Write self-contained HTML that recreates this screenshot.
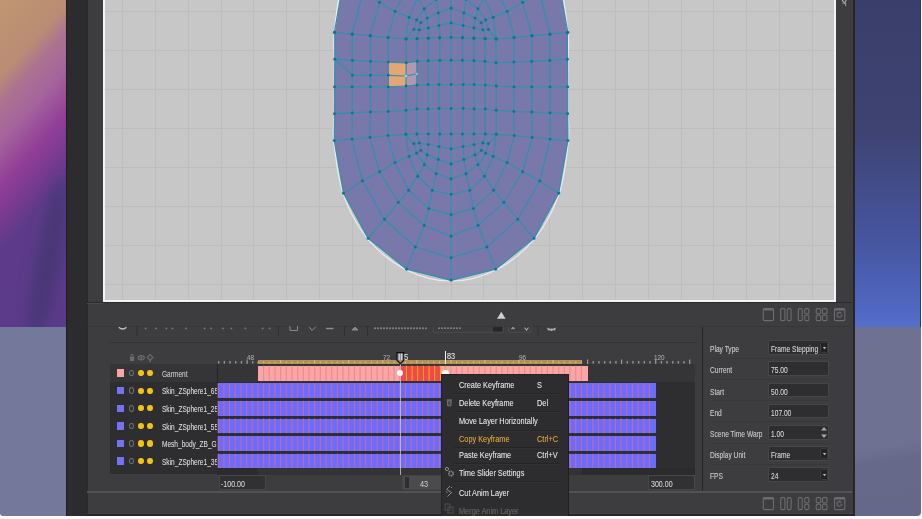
<!DOCTYPE html>
<html><head><meta charset="utf-8">
<style>
*{margin:0;padding:0;box-sizing:border-box}
html,body{width:922px;height:519px;overflow:hidden;background:#fbfbfb;font-family:"Liberation Sans",sans-serif}
.a{position:absolute}
.t{position:absolute;white-space:nowrap;line-height:1;color:#cfcfcf;font-size:8.5px;text-shadow:0 0 0.5px rgba(255,255,255,0.35)}
</style></head><body>

<svg class="a" style="left:0;top:0" width="66" height="327"><defs><linearGradient id="lg" gradientUnits="userSpaceOnUse" x1="-66" y1="60" x2="160" y2="265"><stop offset="0" stop-color="#c29872"/><stop offset="0.2" stop-color="#b98c74"/><stop offset="0.26" stop-color="#ac7290"/><stop offset="0.34" stop-color="#a4649c"/><stop offset="0.44" stop-color="#923e97"/><stop offset="0.51" stop-color="#7a3a90"/><stop offset="0.58" stop-color="#5e3b8a"/><stop offset="1" stop-color="#5a3b8c"/></linearGradient><filter id="bl" x="-1" y="-1" width="3" height="3"><feGaussianBlur stdDeviation="7"/></filter></defs><rect width="66" height="327" fill="url(#lg)"/><ellipse cx="48" cy="262" rx="12" ry="85" transform="rotate(10 48 262)" fill="#3a3468" opacity="0.6" filter="url(#bl)"/></svg>
<div class="a" style="left:0;top:326.5px;width:66px;height:189.5px;background:#74789a;border-bottom-left-radius:3px"></div>
<div class="a" style="left:855px;top:0;width:66px;height:327px;background:linear-gradient(180deg,#3a3e6a 0%,#3e4372 40%,#4756a2 75%,#5068c2 95%,#5570cc 100%)"></div>
<div class="a" style="left:855px;top:326.5px;width:66px;height:189.5px;background:linear-gradient(170deg,#6f7193 0%,#6f7193 62%,#67698b 70%,#66688a 100%);border-bottom-right-radius:4px"></div>
<div class="a" style="left:920px;top:0;width:1px;height:327px;background:#30356a"></div>
<div class="a" style="left:66px;top:0;width:21px;height:516px;background:#2c2c2e;border-left:1px solid #1e1e20"></div>
<div class="a" style="left:87.8px;top:0;width:765.4px;height:516px;background:#3d3d3f"></div>
<div class="a" style="left:85.8px;top:0;width:2px;height:516px;background:#2a2a2c"></div>
<div class="a" style="left:853.2px;top:0;width:1.8px;height:516px;background:#262628"></div>
<div class="a" style="left:103px;top:0;width:733px;height:302px;background:#f4f4f4"></div>
<div class="a" style="left:105px;top:0;width:729px;height:300px;background:#c7c7c7;overflow:hidden">
<div class="a" style="left:17.0px;top:0;width:1px;height:300px;background:#bdbdbd"></div>
<div class="a" style="left:49.9px;top:0;width:1px;height:300px;background:#bdbdbd"></div>
<div class="a" style="left:82.7px;top:0;width:1px;height:300px;background:#bdbdbd"></div>
<div class="a" style="left:115.6px;top:0;width:1px;height:300px;background:#bdbdbd"></div>
<div class="a" style="left:148.4px;top:0;width:1px;height:300px;background:#bdbdbd"></div>
<div class="a" style="left:181.3px;top:0;width:1px;height:300px;background:#bdbdbd"></div>
<div class="a" style="left:214.1px;top:0;width:1px;height:300px;background:#bdbdbd"></div>
<div class="a" style="left:247.0px;top:0;width:1px;height:300px;background:#bdbdbd"></div>
<div class="a" style="left:279.9px;top:0;width:1px;height:300px;background:#bdbdbd"></div>
<div class="a" style="left:312.7px;top:0;width:1px;height:300px;background:#bdbdbd"></div>
<div class="a" style="left:345.6px;top:0;width:1px;height:300px;background:#bdbdbd"></div>
<div class="a" style="left:378.4px;top:0;width:1px;height:300px;background:#bdbdbd"></div>
<div class="a" style="left:411.3px;top:0;width:1px;height:300px;background:#bdbdbd"></div>
<div class="a" style="left:444.1px;top:0;width:1px;height:300px;background:#bdbdbd"></div>
<div class="a" style="left:477.0px;top:0;width:1px;height:300px;background:#bdbdbd"></div>
<div class="a" style="left:509.9px;top:0;width:1px;height:300px;background:#bdbdbd"></div>
<div class="a" style="left:542.7px;top:0;width:1px;height:300px;background:#bdbdbd"></div>
<div class="a" style="left:575.6px;top:0;width:1px;height:300px;background:#bdbdbd"></div>
<div class="a" style="left:608.4px;top:0;width:1px;height:300px;background:#bdbdbd"></div>
<div class="a" style="left:641.3px;top:0;width:1px;height:300px;background:#bdbdbd"></div>
<div class="a" style="left:674.1px;top:0;width:1px;height:300px;background:#bdbdbd"></div>
<div class="a" style="left:707.0px;top:0;width:1px;height:300px;background:#bdbdbd"></div>
<div class="a" style="left:0;top:11.0px;width:729px;height:1px;background:#bdbdbd"></div>
<div class="a" style="left:0;top:49.9px;width:729px;height:1px;background:#bdbdbd"></div>
<div class="a" style="left:0;top:88.9px;width:729px;height:1px;background:#bdbdbd"></div>
<div class="a" style="left:0;top:127.8px;width:729px;height:1px;background:#bdbdbd"></div>
<div class="a" style="left:0;top:166.7px;width:729px;height:1px;background:#bdbdbd"></div>
<div class="a" style="left:0;top:205.7px;width:729px;height:1px;background:#bdbdbd"></div>
<div class="a" style="left:0;top:244.6px;width:729px;height:1px;background:#bdbdbd"></div>
<div class="a" style="left:0;top:283.5px;width:729px;height:1px;background:#bdbdbd"></div>
</div>
<svg class="a" style="left:0;top:0" width="922" height="302" viewBox="0 0 922 302">
<path d="M343.5,-18.4 C337.9,-2.7 336.2,19.6 334.8,32.5 C333.4,45.4 334.9,50.1 334.8,59.2 C334.8,68.3 334.6,77.8 334.5,86.9 C334.4,96.0 334.5,104.8 334.5,113.7 C334.5,122.7 332.8,127.3 334.3,140.6 C335.8,153.8 337.9,176.9 343.5,193.2 C349.1,209.5 357.6,225.7 368.1,238.4 C378.6,251.1 392.8,262.2 406.6,269.2 C420.4,276.2 436.3,280.3 451.1,280.3 C465.9,280.3 481.8,276.2 495.6,269.2 C509.4,262.2 523.6,251.1 534.1,238.4 C544.6,225.7 553.1,209.5 558.7,193.2 C564.3,176.9 566.4,153.8 567.9,140.6 C569.4,127.3 567.7,122.7 567.7,113.7 C567.7,104.8 567.8,96.0 567.7,86.9 C567.7,77.8 567.5,68.3 567.4,59.2 C567.4,50.1 568.9,45.4 567.4,32.5 C566.0,19.6 564.2,-2.7 558.7,-18.4" fill="none" stroke="#eeeeee" stroke-width="1.1" transform="translate(451.1 90) scale(1.004) translate(-451.1 -90)"/>
<polygon points="343.5,-18.4 334.8,32.5 334.8,59.2 334.5,86.9 334.5,113.7 334.3,140.6 343.5,193.2 368.1,238.4 406.6,269.2 451.1,280.3 495.6,269.2 534.1,238.4 558.7,193.2 567.9,140.6 567.7,113.7 567.7,86.9 567.4,59.2 567.4,32.5 558.7,-18.4" fill="#7878aa"/>
<rect x="388.5" y="62.4" width="17.5" height="24.2" fill="#e3a674"/>
<polygon points="406,62.6 416.3,61.5 416.3,85.3 406,86.2" fill="#b596ae"/>
<g fill="none" stroke="#2f91b0" stroke-width="1.2" stroke-linejoin="round">
<polyline points="334.8,32.5 352.4,34.2 370.5,35.8 388.3,37.6 406.2,39.0 417.3,38.7 428.4,38.3 439.7,37.8 451.1,37.4 462.5,37.8 473.8,38.3 484.9,38.7 496.0,39.0 513.9,37.6 531.7,35.8 549.8,34.2 567.4,32.5"/>
<polyline points="334.8,59.2 352.4,60.4 370.5,61.4 388.3,62.1 406.2,62.8 417.2,61.4 428.3,60.7 439.8,60.4 451.1,60.3 462.4,60.4 473.9,60.7 485.0,61.4 496.0,62.8 513.9,62.1 531.7,61.4 549.8,60.4 567.4,59.2"/>
<polyline points="334.5,86.9 352.2,86.9 370.4,86.9 388.3,86.9 406.0,86.0 416.9,85.1 428.1,84.6 439.0,84.6 451.1,84.5 463.2,84.6 474.1,84.6 485.3,85.1 496.2,86.0 513.9,86.9 531.8,86.9 550.0,86.9 567.7,86.9"/>
<polyline points="334.5,113.7 352.2,112.9 370.4,112.0 388.3,111.5 406.0,110.3 416.9,109.0 428.1,109.0 439.0,108.5 451.1,108.5 463.2,108.5 474.1,109.0 485.3,109.0 496.2,110.3 513.9,111.5 531.8,112.0 550.0,112.9 567.7,113.7"/>
<polyline points="334.3,140.6 352.1,139.1 370.0,137.5 388.0,135.6 405.9,134.3 416.9,134.0 428.3,134.0 439.8,134.0 451.1,134.0 462.4,134.0 473.9,134.0 485.3,134.0 496.3,134.3 514.2,135.6 532.2,137.5 550.1,139.1 567.9,140.6"/>
<polyline points="334.8,32.5 334.8,59.2 334.5,86.9 334.5,113.7 334.3,140.6"/>
<polyline points="567.4,32.5 567.4,59.2 567.7,86.9 567.7,113.7 567.9,140.6"/>
<polyline points="352.4,34.2 352.4,60.4 352.2,86.9 352.2,112.9 352.1,139.1"/>
<polyline points="549.8,34.2 549.8,60.4 550.0,86.9 550.0,112.9 550.1,139.1"/>
<polyline points="370.5,35.8 370.5,61.4 370.4,86.9 370.4,112.0 370.0,137.5"/>
<polyline points="531.7,35.8 531.7,61.4 531.8,86.9 531.8,112.0 532.2,137.5"/>
<polyline points="388.3,37.6 388.3,62.1 388.3,86.9 388.3,111.5 388.0,135.6"/>
<polyline points="513.9,37.6 513.9,62.1 513.9,86.9 513.9,111.5 514.2,135.6"/>
<polyline points="406.2,39.0 406.2,62.8 406.0,86.0 406.0,110.3 405.9,134.3"/>
<polyline points="496.0,39.0 496.0,62.8 496.2,86.0 496.2,110.3 496.3,134.3"/>
<polyline points="417.3,38.7 417.2,61.4 416.9,85.1 416.9,109.0 416.9,134.0"/>
<polyline points="484.9,38.7 485.0,61.4 485.3,85.1 485.3,109.0 485.3,134.0"/>
<polyline points="428.4,38.3 428.3,60.7 428.1,84.6 428.1,109.0 428.3,134.0"/>
<polyline points="473.8,38.3 473.9,60.7 474.1,84.6 474.1,109.0 473.9,134.0"/>
<polyline points="439.7,37.8 439.8,60.4 439.0,84.6 439.0,108.5 439.8,134.0"/>
<polyline points="462.5,37.8 462.4,60.4 463.2,84.6 463.2,108.5 462.4,134.0"/>
<polyline points="451.1,37.4 451.1,60.3 451.1,84.5 451.1,108.5 451.1,134.0"/>
<polyline points="334.3,140.6 343.5,193.2 368.1,238.4 406.6,269.2 451.1,280.3"/>
<polyline points="567.9,140.6 558.7,193.2 534.1,238.4 495.6,269.2 451.1,280.3"/>
<polyline points="352.1,139.1 362.4,180.9 384.5,219.3 415.3,247.0 451.1,257.8"/>
<polyline points="550.1,139.1 539.8,180.9 517.7,219.3 486.9,247.0 451.1,257.8"/>
<polyline points="370.0,137.5 379.5,171.8 398.3,202.4 424.2,225.5 451.1,236.3"/>
<polyline points="532.2,137.5 522.7,171.8 503.9,202.4 478.0,225.5 451.1,236.3"/>
<polyline points="388.0,135.6 395.0,162.6 408.6,190.2 428.8,208.6 451.1,214.7"/>
<polyline points="514.2,135.6 507.2,162.6 493.6,190.2 473.4,208.6 451.1,214.7"/>
<polyline points="405.9,134.3 409.0,156.4 417.7,176.2 432.3,190.4 451.1,194.4"/>
<polyline points="496.3,134.3 493.2,156.4 484.5,176.2 469.9,190.4 451.1,194.4"/>
<polyline points="416.6,153.3 424.3,164.7 436.2,173.8 451.1,178.9"/>
<polyline points="485.6,153.3 477.9,164.7 466.0,173.8 451.1,178.9"/>
<polyline points="420.9,150.4 427.2,154.9 438.3,159.6 451.1,164.0"/>
<polyline points="481.3,150.4 475.0,154.9 463.9,159.6 451.1,164.0"/>
<polyline points="413.8,143.8 419.3,143.0 428.3,144.6 439.0,146.6 451.1,148.9"/>
<polyline points="488.4,143.8 482.9,143.0 473.9,144.6 463.2,146.6 451.1,148.9"/>
<polyline points="343.5,193.2 362.4,180.9 379.5,171.8 395.0,162.6 409.0,156.4 416.6,153.3 420.9,150.4 419.3,143.0 416.9,134.0"/>
<polyline points="558.7,193.2 539.8,180.9 522.7,171.8 507.2,162.6 493.2,156.4 485.6,153.3 481.3,150.4 482.9,143.0 485.3,134.0"/>
<polyline points="368.1,238.4 384.5,219.3 398.3,202.4 408.6,190.2 417.7,176.2 424.3,164.7 427.2,154.9 428.3,144.6 428.3,134.0"/>
<polyline points="534.1,238.4 517.7,219.3 503.9,202.4 493.6,190.2 484.5,176.2 477.9,164.7 475.0,154.9 473.9,144.6 473.9,134.0"/>
<polyline points="406.6,269.2 415.3,247.0 424.2,225.5 428.8,208.6 432.3,190.4 436.2,173.8 438.3,159.6 439.0,146.6 439.8,134.0"/>
<polyline points="495.6,269.2 486.9,247.0 478.0,225.5 473.4,208.6 469.9,190.4 466.0,173.8 463.9,159.6 463.2,146.6 462.4,134.0"/>
<polyline points="405.9,134.3 413.8,143.8 416.6,153.3"/>
<polyline points="496.3,134.3 488.4,143.8 485.6,153.3"/>
<polyline points="334.3,32.5 343.5,-18.4 368.1,-62.1 406.6,-91.9 451.1,-104.5"/>
<polyline points="567.9,32.5 558.7,-18.4 534.1,-62.1 495.6,-91.9 451.1,-104.5"/>
<polyline points="352.1,34.2 362.4,-6.4 384.5,-43.6 415.3,-70.8 451.1,-82.7"/>
<polyline points="550.1,34.2 539.8,-6.4 517.7,-43.6 486.9,-70.8 451.1,-82.7"/>
<polyline points="370.0,35.8 379.5,2.5 398.3,-27.1 424.2,-50.3 451.1,-61.8"/>
<polyline points="532.2,35.8 522.7,2.5 503.9,-27.1 478.0,-50.3 451.1,-61.8"/>
<polyline points="388.0,37.6 395.0,11.4 408.6,-15.4 428.8,-34.1 451.1,-40.9"/>
<polyline points="514.2,37.6 507.2,11.4 493.6,-15.4 473.4,-34.1 451.1,-40.9"/>
<polyline points="405.9,39.0 409.0,17.4 417.7,-2.2 432.3,-16.6 451.1,-21.2"/>
<polyline points="496.3,39.0 493.2,17.4 484.5,-2.2 469.9,-16.6 451.1,-21.2"/>
<polyline points="416.6,20.0 424.3,8.7 436.2,-0.7 451.1,-6.2"/>
<polyline points="485.6,20.0 477.9,8.7 466.0,-0.7 451.1,-6.2"/>
<polyline points="420.9,22.7 427.2,18.1 438.3,13.0 451.1,8.3"/>
<polyline points="481.3,22.7 475.0,18.1 463.9,13.0 451.1,8.3"/>
<polyline points="413.8,29.4 419.3,29.9 428.3,28.0 439.0,25.6 451.1,22.9"/>
<polyline points="488.4,29.4 482.9,29.9 473.9,28.0 463.2,25.6 451.1,22.9"/>
<polyline points="343.5,-18.4 362.4,-6.4 379.5,2.5 395.0,11.4 409.0,17.4 416.6,20.0 420.9,22.7 419.3,29.9 416.9,38.7"/>
<polyline points="558.7,-18.4 539.8,-6.4 522.7,2.5 507.2,11.4 493.2,17.4 485.6,20.0 481.3,22.7 482.9,29.9 485.3,38.7"/>
<polyline points="368.1,-62.1 384.5,-43.6 398.3,-27.1 408.6,-15.4 417.7,-2.2 424.3,8.7 427.2,18.1 428.3,28.0 428.3,38.3"/>
<polyline points="534.1,-62.1 517.7,-43.6 503.9,-27.1 493.6,-15.4 484.5,-2.2 477.9,8.7 475.0,18.1 473.9,28.0 473.9,38.3"/>
<polyline points="406.6,-91.9 415.3,-70.8 424.2,-50.3 428.8,-34.1 432.3,-16.6 436.2,-0.7 438.3,13.0 439.0,25.6 439.8,37.8"/>
<polyline points="495.6,-91.9 486.9,-70.8 478.0,-50.3 473.4,-34.1 469.9,-16.6 466.0,-0.7 463.9,13.0 463.2,25.6 462.4,37.8"/>
<polyline points="405.9,39.0 413.8,29.4 416.6,20.0"/>
<polyline points="496.3,39.0 488.4,29.4 485.6,20.0"/>
<polyline points="451.1,134.0 451.1,148.9 451.1,164.0 451.1,178.9 451.1,194.4 451.1,214.7 451.1,236.3 451.1,257.8 451.1,280.3"/>
<polyline points="451.1,37.4 451.1,22.9 451.1,8.3 451.1,-6.2 451.1,-21.2 451.1,-40.9 451.1,-61.8 451.1,-82.7 451.1,-104.5"/>
<polyline points="334.8,59.2 352.4,75.3 370.4,75.3 388.3,75.3 406.0,76.0 416.5,73.9"/>
</g><g fill="#176f8e">
<circle cx="334.3" cy="32.5" r="1.45"/>
<circle cx="334.3" cy="140.6" r="1.45"/>
<circle cx="334.5" cy="86.9" r="1.45"/>
<circle cx="334.5" cy="113.7" r="1.45"/>
<circle cx="334.8" cy="32.5" r="1.45"/>
<circle cx="334.8" cy="59.2" r="1.45"/>
<circle cx="343.5" cy="-18.4" r="1.45"/>
<circle cx="343.5" cy="193.2" r="1.45"/>
<circle cx="352.1" cy="34.2" r="1.45"/>
<circle cx="352.1" cy="139.1" r="1.45"/>
<circle cx="352.2" cy="86.9" r="1.45"/>
<circle cx="352.2" cy="112.9" r="1.45"/>
<circle cx="352.4" cy="34.2" r="1.45"/>
<circle cx="352.4" cy="60.4" r="1.45"/>
<circle cx="352.4" cy="75.3" r="1.45"/>
<circle cx="362.4" cy="-6.4" r="1.45"/>
<circle cx="362.4" cy="180.9" r="1.45"/>
<circle cx="368.1" cy="-62.1" r="1.45"/>
<circle cx="368.1" cy="238.4" r="1.45"/>
<circle cx="370.0" cy="35.8" r="1.45"/>
<circle cx="370.0" cy="137.5" r="1.45"/>
<circle cx="370.4" cy="75.3" r="1.45"/>
<circle cx="370.4" cy="86.9" r="1.45"/>
<circle cx="370.4" cy="112.0" r="1.45"/>
<circle cx="370.5" cy="35.8" r="1.45"/>
<circle cx="370.5" cy="61.4" r="1.45"/>
<circle cx="379.5" cy="2.5" r="1.45"/>
<circle cx="379.5" cy="171.8" r="1.45"/>
<circle cx="384.5" cy="-43.6" r="1.45"/>
<circle cx="384.5" cy="219.3" r="1.45"/>
<circle cx="388.0" cy="37.6" r="1.45"/>
<circle cx="388.0" cy="135.6" r="1.45"/>
<circle cx="388.3" cy="37.6" r="1.45"/>
<circle cx="388.3" cy="62.1" r="1.45"/>
<circle cx="388.3" cy="75.3" r="1.45"/>
<circle cx="388.3" cy="86.9" r="1.45"/>
<circle cx="388.3" cy="111.5" r="1.45"/>
<circle cx="395.0" cy="11.4" r="1.45"/>
<circle cx="395.0" cy="162.6" r="1.45"/>
<circle cx="398.3" cy="-27.1" r="1.45"/>
<circle cx="398.3" cy="202.4" r="1.45"/>
<circle cx="405.9" cy="39.0" r="1.45"/>
<circle cx="405.9" cy="134.3" r="1.45"/>
<circle cx="406.0" cy="76.0" r="1.45"/>
<circle cx="406.0" cy="86.0" r="1.45"/>
<circle cx="406.0" cy="110.3" r="1.45"/>
<circle cx="406.2" cy="39.0" r="1.45"/>
<circle cx="406.2" cy="62.8" r="1.45"/>
<circle cx="406.6" cy="-91.9" r="1.45"/>
<circle cx="406.6" cy="269.2" r="1.45"/>
<circle cx="408.6" cy="-15.4" r="1.45"/>
<circle cx="408.6" cy="190.2" r="1.45"/>
<circle cx="409.0" cy="17.4" r="1.45"/>
<circle cx="409.0" cy="156.4" r="1.45"/>
<circle cx="413.8" cy="29.4" r="1.45"/>
<circle cx="413.8" cy="143.8" r="1.45"/>
<circle cx="415.3" cy="-70.8" r="1.45"/>
<circle cx="415.3" cy="247.0" r="1.45"/>
<circle cx="416.5" cy="73.9" r="1.45"/>
<circle cx="416.6" cy="20.0" r="1.45"/>
<circle cx="416.6" cy="153.3" r="1.45"/>
<circle cx="416.9" cy="38.7" r="1.45"/>
<circle cx="416.9" cy="85.1" r="1.45"/>
<circle cx="416.9" cy="109.0" r="1.45"/>
<circle cx="416.9" cy="134.0" r="1.45"/>
<circle cx="417.2" cy="61.4" r="1.45"/>
<circle cx="417.3" cy="38.7" r="1.45"/>
<circle cx="417.7" cy="-2.2" r="1.45"/>
<circle cx="417.7" cy="176.2" r="1.45"/>
<circle cx="419.3" cy="29.9" r="1.45"/>
<circle cx="419.3" cy="143.0" r="1.45"/>
<circle cx="420.9" cy="22.7" r="1.45"/>
<circle cx="420.9" cy="150.4" r="1.45"/>
<circle cx="424.2" cy="-50.3" r="1.45"/>
<circle cx="424.2" cy="225.5" r="1.45"/>
<circle cx="424.3" cy="8.7" r="1.45"/>
<circle cx="424.3" cy="164.7" r="1.45"/>
<circle cx="427.2" cy="18.1" r="1.45"/>
<circle cx="427.2" cy="154.9" r="1.45"/>
<circle cx="428.1" cy="84.6" r="1.45"/>
<circle cx="428.1" cy="109.0" r="1.45"/>
<circle cx="428.3" cy="28.0" r="1.45"/>
<circle cx="428.3" cy="38.3" r="1.45"/>
<circle cx="428.3" cy="60.7" r="1.45"/>
<circle cx="428.3" cy="134.0" r="1.45"/>
<circle cx="428.3" cy="144.6" r="1.45"/>
<circle cx="428.4" cy="38.3" r="1.45"/>
<circle cx="428.8" cy="-34.1" r="1.45"/>
<circle cx="428.8" cy="208.6" r="1.45"/>
<circle cx="432.3" cy="-16.6" r="1.45"/>
<circle cx="432.3" cy="190.4" r="1.45"/>
<circle cx="436.2" cy="-0.7" r="1.45"/>
<circle cx="436.2" cy="173.8" r="1.45"/>
<circle cx="438.3" cy="13.0" r="1.45"/>
<circle cx="438.3" cy="159.6" r="1.45"/>
<circle cx="439.0" cy="25.6" r="1.45"/>
<circle cx="439.0" cy="84.6" r="1.45"/>
<circle cx="439.0" cy="108.5" r="1.45"/>
<circle cx="439.0" cy="146.6" r="1.45"/>
<circle cx="439.7" cy="37.8" r="1.45"/>
<circle cx="439.8" cy="37.8" r="1.45"/>
<circle cx="439.8" cy="60.4" r="1.45"/>
<circle cx="439.8" cy="134.0" r="1.45"/>
<circle cx="451.1" cy="-104.5" r="1.45"/>
<circle cx="451.1" cy="-82.7" r="1.45"/>
<circle cx="451.1" cy="-61.8" r="1.45"/>
<circle cx="451.1" cy="-40.9" r="1.45"/>
<circle cx="451.1" cy="-21.2" r="1.45"/>
<circle cx="451.1" cy="-6.2" r="1.45"/>
<circle cx="451.1" cy="8.3" r="1.45"/>
<circle cx="451.1" cy="22.9" r="1.45"/>
<circle cx="451.1" cy="37.4" r="1.45"/>
<circle cx="451.1" cy="60.3" r="1.45"/>
<circle cx="451.1" cy="84.5" r="1.45"/>
<circle cx="451.1" cy="108.5" r="1.45"/>
<circle cx="451.1" cy="134.0" r="1.45"/>
<circle cx="451.1" cy="148.9" r="1.45"/>
<circle cx="451.1" cy="164.0" r="1.45"/>
<circle cx="451.1" cy="178.9" r="1.45"/>
<circle cx="451.1" cy="194.4" r="1.45"/>
<circle cx="451.1" cy="214.7" r="1.45"/>
<circle cx="451.1" cy="236.3" r="1.45"/>
<circle cx="451.1" cy="257.8" r="1.45"/>
<circle cx="451.1" cy="280.3" r="1.45"/>
<circle cx="462.4" cy="37.8" r="1.45"/>
<circle cx="462.4" cy="60.4" r="1.45"/>
<circle cx="462.4" cy="134.0" r="1.45"/>
<circle cx="462.5" cy="37.8" r="1.45"/>
<circle cx="463.2" cy="25.6" r="1.45"/>
<circle cx="463.2" cy="84.6" r="1.45"/>
<circle cx="463.2" cy="108.5" r="1.45"/>
<circle cx="463.2" cy="146.6" r="1.45"/>
<circle cx="463.9" cy="13.0" r="1.45"/>
<circle cx="463.9" cy="159.6" r="1.45"/>
<circle cx="466.0" cy="-0.7" r="1.45"/>
<circle cx="466.0" cy="173.8" r="1.45"/>
<circle cx="469.9" cy="-16.6" r="1.45"/>
<circle cx="469.9" cy="190.4" r="1.45"/>
<circle cx="473.4" cy="-34.1" r="1.45"/>
<circle cx="473.4" cy="208.6" r="1.45"/>
<circle cx="473.8" cy="38.3" r="1.45"/>
<circle cx="473.9" cy="28.0" r="1.45"/>
<circle cx="473.9" cy="38.3" r="1.45"/>
<circle cx="473.9" cy="60.7" r="1.45"/>
<circle cx="473.9" cy="134.0" r="1.45"/>
<circle cx="473.9" cy="144.6" r="1.45"/>
<circle cx="474.1" cy="84.6" r="1.45"/>
<circle cx="474.1" cy="109.0" r="1.45"/>
<circle cx="475.0" cy="18.1" r="1.45"/>
<circle cx="475.0" cy="154.9" r="1.45"/>
<circle cx="477.9" cy="8.7" r="1.45"/>
<circle cx="477.9" cy="164.7" r="1.45"/>
<circle cx="478.0" cy="-50.3" r="1.45"/>
<circle cx="478.0" cy="225.5" r="1.45"/>
<circle cx="481.3" cy="22.7" r="1.45"/>
<circle cx="481.3" cy="150.4" r="1.45"/>
<circle cx="482.9" cy="29.9" r="1.45"/>
<circle cx="482.9" cy="143.0" r="1.45"/>
<circle cx="484.5" cy="-2.2" r="1.45"/>
<circle cx="484.5" cy="176.2" r="1.45"/>
<circle cx="484.9" cy="38.7" r="1.45"/>
<circle cx="485.0" cy="61.4" r="1.45"/>
<circle cx="485.3" cy="38.7" r="1.45"/>
<circle cx="485.3" cy="85.1" r="1.45"/>
<circle cx="485.3" cy="109.0" r="1.45"/>
<circle cx="485.3" cy="134.0" r="1.45"/>
<circle cx="485.6" cy="20.0" r="1.45"/>
<circle cx="485.6" cy="153.3" r="1.45"/>
<circle cx="486.9" cy="-70.8" r="1.45"/>
<circle cx="486.9" cy="247.0" r="1.45"/>
<circle cx="488.4" cy="29.4" r="1.45"/>
<circle cx="488.4" cy="143.8" r="1.45"/>
<circle cx="493.2" cy="17.4" r="1.45"/>
<circle cx="493.2" cy="156.4" r="1.45"/>
<circle cx="493.6" cy="-15.4" r="1.45"/>
<circle cx="493.6" cy="190.2" r="1.45"/>
<circle cx="495.6" cy="-91.9" r="1.45"/>
<circle cx="495.6" cy="269.2" r="1.45"/>
<circle cx="496.0" cy="39.0" r="1.45"/>
<circle cx="496.0" cy="62.8" r="1.45"/>
<circle cx="496.2" cy="86.0" r="1.45"/>
<circle cx="496.2" cy="110.3" r="1.45"/>
<circle cx="496.3" cy="39.0" r="1.45"/>
<circle cx="496.3" cy="134.3" r="1.45"/>
<circle cx="503.9" cy="-27.1" r="1.45"/>
<circle cx="503.9" cy="202.4" r="1.45"/>
<circle cx="507.2" cy="11.4" r="1.45"/>
<circle cx="507.2" cy="162.6" r="1.45"/>
<circle cx="513.9" cy="37.6" r="1.45"/>
<circle cx="513.9" cy="62.1" r="1.45"/>
<circle cx="513.9" cy="86.9" r="1.45"/>
<circle cx="513.9" cy="111.5" r="1.45"/>
<circle cx="514.2" cy="37.6" r="1.45"/>
<circle cx="514.2" cy="135.6" r="1.45"/>
<circle cx="517.7" cy="-43.6" r="1.45"/>
<circle cx="517.7" cy="219.3" r="1.45"/>
<circle cx="522.7" cy="2.5" r="1.45"/>
<circle cx="522.7" cy="171.8" r="1.45"/>
<circle cx="531.7" cy="35.8" r="1.45"/>
<circle cx="531.7" cy="61.4" r="1.45"/>
<circle cx="531.8" cy="86.9" r="1.45"/>
<circle cx="531.8" cy="112.0" r="1.45"/>
<circle cx="532.2" cy="35.8" r="1.45"/>
<circle cx="532.2" cy="137.5" r="1.45"/>
<circle cx="534.1" cy="-62.1" r="1.45"/>
<circle cx="534.1" cy="238.4" r="1.45"/>
<circle cx="539.8" cy="-6.4" r="1.45"/>
<circle cx="539.8" cy="180.9" r="1.45"/>
<circle cx="549.8" cy="34.2" r="1.45"/>
<circle cx="549.8" cy="60.4" r="1.45"/>
<circle cx="550.0" cy="86.9" r="1.45"/>
<circle cx="550.0" cy="112.9" r="1.45"/>
<circle cx="550.1" cy="34.2" r="1.45"/>
<circle cx="550.1" cy="139.1" r="1.45"/>
<circle cx="558.7" cy="-18.4" r="1.45"/>
<circle cx="558.7" cy="193.2" r="1.45"/>
<circle cx="567.4" cy="32.5" r="1.45"/>
<circle cx="567.4" cy="59.2" r="1.45"/>
<circle cx="567.7" cy="86.9" r="1.45"/>
<circle cx="567.7" cy="113.7" r="1.45"/>
<circle cx="567.9" cy="32.5" r="1.45"/>
<circle cx="567.9" cy="140.6" r="1.45"/>
<circle cx="405.9" cy="76.1" r="1.5" fill="#8fd4e4"/><circle cx="416.6" cy="73.9" r="1.4" fill="#7fc4d8"/>
</g></svg>
<svg class="a" style="left:840px;top:0" width="10" height="8"><path d="M2.3,0 L3.5,2.2 M6.2,0 L5,2.2" stroke="#b8b8b8" stroke-width="1.1" fill="none"/><polygon points="2,3.6 6.6,3.6 4.5,2" fill="#c8c8c8"/><line x1="5.6" y1="3.5" x2="5.6" y2="6.2" stroke="#a8a8a8" stroke-width="0.9"/></svg>
<div class="a" style="left:87.0px;top:302.0px;width:765.0px;height:1.2px;background:#2a2a2c;"></div>
<div class="a" style="left:87.0px;top:303.2px;width:16.0px;height:1.0px;background:#4a4a4c;"></div>
<svg class="a" style="left:496px;top:311px" width="11" height="9"><polygon points="5.3,0.8 9.6,7.8 1,7.8" fill="#cfcfcf"/></svg>
<svg class="a" style="left:760px;top:307.4px" width="90" height="16" viewBox="0 0 90 16"><g fill="none" stroke="#6c6c6e" stroke-width="1.1"><rect x="3.3" y="1.6" width="10.2" height="12" rx="1.2"/><line x1="3.3" y1="2.6" x2="13.5" y2="2.6" stroke-width="1.8"/><rect x="20.7" y="1.6" width="4.2" height="12" rx="1.2"/><rect x="27.3" y="1.6" width="3.8" height="12" rx="1.2"/><rect x="38.3" y="1.6" width="3.9" height="12" rx="1.2"/><rect x="44.8" y="1.6" width="4.1" height="5.3" rx="1.2"/><rect x="44.8" y="8.3" width="4.1" height="5.3" rx="1.2"/><rect x="56.2" y="1.6" width="4.5" height="5.3" rx="1.2"/><rect x="62.5" y="1.6" width="4.5" height="5.3" rx="1.2"/><rect x="56.2" y="8.3" width="4.5" height="5.3" rx="1.2"/><rect x="62.5" y="8.3" width="4.5" height="5.3" rx="1.2"/><rect x="74.5" y="1.6" width="10.3" height="12" rx="1.2"/><line x1="74.5" y1="2.6" x2="84.8" y2="2.6" stroke-width="1.8"/><path d="M81.8,7.8 A2.4,2.4 0 1 1 80.2,5.6" stroke-width="1.2"/><path d="M79.6,4.6 l1.6,1.2 l-1.5,1.2" stroke-width="0.9"/></g></svg>
<svg class="a" style="left:760px;top:496.2px" width="90" height="16" viewBox="0 0 90 16"><g fill="none" stroke="#6c6c6e" stroke-width="1.1"><rect x="3.3" y="1.6" width="10.2" height="12" rx="1.2"/><line x1="3.3" y1="2.6" x2="13.5" y2="2.6" stroke-width="1.8"/><rect x="20.7" y="1.6" width="4.2" height="12" rx="1.2"/><rect x="27.3" y="1.6" width="3.8" height="12" rx="1.2"/><rect x="38.3" y="1.6" width="3.9" height="12" rx="1.2"/><rect x="44.8" y="1.6" width="4.1" height="5.3" rx="1.2"/><rect x="44.8" y="8.3" width="4.1" height="5.3" rx="1.2"/><rect x="56.2" y="1.6" width="4.5" height="5.3" rx="1.2"/><rect x="62.5" y="1.6" width="4.5" height="5.3" rx="1.2"/><rect x="56.2" y="8.3" width="4.5" height="5.3" rx="1.2"/><rect x="62.5" y="8.3" width="4.5" height="5.3" rx="1.2"/><rect x="74.5" y="1.6" width="10.3" height="12" rx="1.2"/><line x1="74.5" y1="2.6" x2="84.8" y2="2.6" stroke-width="1.8"/><path d="M81.8,7.8 A2.4,2.4 0 1 1 80.2,5.6" stroke-width="1.2"/><path d="M79.6,4.6 l1.6,1.2 l-1.5,1.2" stroke-width="0.9"/></g></svg>
<div class="a" style="left:87.0px;top:325.5px;width:765.0px;height:1.0px;background:#38383a;"></div>
<svg class="a" style="left:0;top:324px" width="700" height="16">
<path d="M118.8,3.2 Q122.6,6.8 126.4,3.2" fill="none" stroke="#c4c4c4" stroke-width="1.3"/>
<g fill="#7c7c7c">
<rect x="144.8" y="3.6" width="1.6" height="1.6"/>
<rect x="155.2" y="3.6" width="1.6" height="1.6"/>
<rect x="165.6" y="3.6" width="1.6" height="1.6"/>
<rect x="171.6" y="3.6" width="1.6" height="1.6"/>
<rect x="185.2" y="3.6" width="1.6" height="1.6"/>
<rect x="203.8" y="3.6" width="1.6" height="1.6"/>
<rect x="210.2" y="3.6" width="1.6" height="1.6"/>
<rect x="222.0" y="3.6" width="1.6" height="1.6"/>
<rect x="230.6" y="3.6" width="1.6" height="1.6"/>
<rect x="244.5" y="3.6" width="1.6" height="1.6"/>
<rect x="261.9" y="3.6" width="1.6" height="1.6"/>
<rect x="268.8" y="3.6" width="1.6" height="1.6"/>
<rect x="374" y="3.4" width="2" height="1.8"/>
<rect x="377" y="3.4" width="2" height="1.8"/>
<rect x="380" y="3.4" width="2" height="1.8"/>
<rect x="383" y="3.4" width="2" height="1.8"/>
<rect x="386" y="3.4" width="2" height="1.8"/>
<rect x="389" y="3.4" width="2" height="1.8"/>
<rect x="392" y="3.4" width="2" height="1.8"/>
<rect x="395" y="3.4" width="2" height="1.8"/>
<rect x="398" y="3.4" width="2" height="1.8"/>
<rect x="401" y="3.4" width="2" height="1.8"/>
<rect x="404" y="3.4" width="2" height="1.8"/>
<rect x="407" y="3.4" width="2" height="1.8"/>
<rect x="410" y="3.4" width="2" height="1.8"/>
<rect x="413" y="3.4" width="2" height="1.8"/>
<rect x="416" y="3.4" width="2" height="1.8"/>
<rect x="419" y="3.4" width="2" height="1.8"/>
<rect x="422" y="3.4" width="2" height="1.8"/>
<rect x="425" y="3.4" width="2" height="1.8"/>
<rect x="438" y="3.4" width="2" height="1.6"/>
<rect x="441" y="3.4" width="2" height="1.6"/>
<rect x="444" y="3.4" width="2" height="1.6"/>
<rect x="447" y="3.4" width="2" height="1.6"/>
<rect x="450" y="3.4" width="2" height="1.6"/>
<rect x="453" y="3.4" width="2" height="1.6"/>
<rect x="456" y="3.4" width="2" height="1.6"/>
<rect x="459" y="3.4" width="2" height="1.6"/>
</g><g fill="none" stroke="#8a8a8a" stroke-width="1">
<path d="M290,2 V6.5 H297.5 V2"/><path d="M309,2.5 L312,6.5 L316,2.5"/><line x1="326" y1="4.5" x2="333.5" y2="4.5" stroke-width="1.5"/><path d="M352,6 L355,3 L358,6 Z" fill="#8a8a8a"/>
</g><g stroke="#303032" stroke-width="1"><line x1="137" y1="2" x2="137" y2="12"/><line x1="278.5" y1="2" x2="278.5" y2="12"/><line x1="344.5" y1="2" x2="344.5" y2="12"/><line x1="367.5" y1="2" x2="367.5" y2="12"/><line x1="538" y1="2" x2="538" y2="12"/></g>
<path d="M433.5,2 V8.3 H503.5 V2 M508.5,2 V8.3 H531 V2" fill="none" stroke="#4a4a4c" stroke-width="1"/>
<rect x="493" y="3" width="9.5" height="4.5" fill="#262628"/>
<path d="M511.5,5 l1.5,-1.5 l1.5,1.5 M524.5,3.5 l2,2.5 l2,-2.5" stroke="#a8a8a8" fill="none" stroke-width="1.1"/>
<path d="M547,3.5 Q549,5 551.5,4.5 Q554,5 556,3.5 L555,6.5 Q553,6 551.5,7 Q550,6 548,6.5 Z" fill="#b0b0b0"/>
</svg>
<div class="a" style="left:109.0px;top:342.0px;width:588.0px;height:1.0px;background:#343436;"></div>
<div class="a" style="left:701.5px;top:327.0px;width:1.6px;height:165.0px;background:#28282a;"></div>
<svg class="a" style="left:126px;top:352px" width="30" height="12"><g fill="none" stroke="#6c6c6c" stroke-width="1">
<rect x="4" y="4.6" width="4.2" height="4.4" fill="#6c6c6c" stroke="none"/><path d="M4.9,4.6 V3.6 A1.2,1.2 0 0 1 7.3,3.6 V4.6"/>
<ellipse cx="15.2" cy="5.8" rx="3.1" ry="2.1" stroke-width="1.2"/><circle cx="15.2" cy="5.8" r="0.8" fill="#6c6c6c"/>
<path d="M24.1,2.6 L26.9,5.4 L24.1,8.2 L21.3,5.4 Z" stroke-width="1.2"/><circle cx="24.1" cy="9.2" r="0.9" fill="#6c6c6c" stroke="none"/>
</g></svg>
<div class="a" style="left:109.5px;top:364.3px;width:107.5px;height:109.5px;background:#2e2e30;"></div>
<div class="a" style="left:217.0px;top:364.3px;width:478.0px;height:110.7px;background:#2e2e30;"></div>
<div class="a" style="left:109.5px;top:364.3px;width:585.5px;height:17.6px;background:#353537;"></div>
<div class="a" style="left:216.6px;top:364.3px;width:1.0px;height:110.0px;background:#262628;"></div>
<div class="a" style="left:109px;top:364px;width:108px;height:110px;overflow:hidden">
<div class="a" style="left:8px;top:5.4px;width:7px;height:7.5px;background:#f7a5a5"></div>
<div class="a" style="left:20px;top:5.9px;width:5px;height:6.6px;border:0.8px solid #707070;border-radius:50%"></div>
<div class="a" style="left:28.9px;top:6.0px;width:5.8px;height:6.4px;background:#f4c414;border-radius:50%"></div>
<div class="a" style="left:38.1px;top:6.0px;width:5.8px;height:6.4px;background:#f4c414;border-radius:50%"></div>
<div class="t" style="left:53px;top:6.9px;font-size:8.2px;color:#c4c4c4;transform:scaleX(0.80);transform-origin:0 0">Garment</div>
<div class="a" style="left:8px;top:22.9px;width:7px;height:7.5px;background:#7474f2"></div>
<div class="a" style="left:20px;top:23.4px;width:5px;height:6.6px;border:0.8px solid #707070;border-radius:50%"></div>
<div class="a" style="left:28.9px;top:23.6px;width:5.8px;height:6.4px;background:#f4c414;border-radius:50%"></div>
<div class="a" style="left:38.1px;top:23.6px;width:5.8px;height:6.4px;background:#f4c414;border-radius:50%"></div>
<div class="t" style="left:53px;top:24.4px;font-size:8.2px;color:#d8d8d8;transform:scaleX(0.80);transform-origin:0 0">Skin_ZSphere1_65</div>
<div class="a" style="left:8px;top:40.5px;width:7px;height:7.5px;background:#7474f2"></div>
<div class="a" style="left:20px;top:41.0px;width:5px;height:6.6px;border:0.8px solid #707070;border-radius:50%"></div>
<div class="a" style="left:28.9px;top:41.1px;width:5.8px;height:6.4px;background:#f4c414;border-radius:50%"></div>
<div class="a" style="left:38.1px;top:41.1px;width:5.8px;height:6.4px;background:#f4c414;border-radius:50%"></div>
<div class="t" style="left:53px;top:42.0px;font-size:8.2px;color:#d8d8d8;transform:scaleX(0.80);transform-origin:0 0">Skin_ZSphere1_25</div>
<div class="a" style="left:8px;top:58.1px;width:7px;height:7.5px;background:#7474f2"></div>
<div class="a" style="left:20px;top:58.6px;width:5px;height:6.6px;border:0.8px solid #707070;border-radius:50%"></div>
<div class="a" style="left:28.9px;top:58.7px;width:5.8px;height:6.4px;background:#f4c414;border-radius:50%"></div>
<div class="a" style="left:38.1px;top:58.7px;width:5.8px;height:6.4px;background:#f4c414;border-radius:50%"></div>
<div class="t" style="left:53px;top:59.6px;font-size:8.2px;color:#d8d8d8;transform:scaleX(0.80);transform-origin:0 0">Skin_ZSphere1_55</div>
<div class="a" style="left:8px;top:75.6px;width:7px;height:7.5px;background:#7474f2"></div>
<div class="a" style="left:20px;top:76.1px;width:5px;height:6.6px;border:0.8px solid #707070;border-radius:50%"></div>
<div class="a" style="left:28.9px;top:76.2px;width:5.8px;height:6.4px;background:#f4c414;border-radius:50%"></div>
<div class="a" style="left:38.1px;top:76.2px;width:5.8px;height:6.4px;background:#f4c414;border-radius:50%"></div>
<div class="t" style="left:53px;top:77.1px;font-size:8.2px;color:#d8d8d8;transform:scaleX(0.80);transform-origin:0 0">Mesh_body_ZB_G</div>
<div class="a" style="left:8px;top:93.1px;width:7px;height:7.5px;background:#7474f2"></div>
<div class="a" style="left:20px;top:93.6px;width:5px;height:6.6px;border:0.8px solid #707070;border-radius:50%"></div>
<div class="a" style="left:28.9px;top:93.7px;width:5.8px;height:6.4px;background:#f4c414;border-radius:50%"></div>
<div class="a" style="left:38.1px;top:93.7px;width:5.8px;height:6.4px;background:#f4c414;border-radius:50%"></div>
<div class="t" style="left:53px;top:94.6px;font-size:8.2px;color:#d8d8d8;transform:scaleX(0.80);transform-origin:0 0">Skin_ZSphere1_35</div>
</div>
<svg class="a" style="left:0;top:350px" width="922" height="20"><g fill="#9a9a9a">
<rect x="218.1" y="11" width="1.3" height="2.6"/>
<rect x="223.7" y="11" width="1.3" height="2.6"/>
<rect x="229.4" y="11" width="1.3" height="2.6"/>
<rect x="235.1" y="11" width="1.3" height="2.6"/>
<rect x="240.8" y="11" width="1.3" height="2.6"/>
<rect x="246.5" y="9.5" width="1.2" height="4.5"/>
<rect x="252.1" y="11" width="1.3" height="2.6"/>
<rect x="587.0" y="9.5" width="1.2" height="4.5"/>
<rect x="592.6" y="11" width="1.3" height="2.6"/>
<rect x="598.3" y="11" width="1.3" height="2.6"/>
<rect x="604.0" y="11" width="1.3" height="2.6"/>
<rect x="609.6" y="11" width="1.3" height="2.6"/>
<rect x="615.3" y="11" width="1.3" height="2.6"/>
<rect x="621.0" y="9.5" width="1.2" height="4.5"/>
<rect x="626.6" y="11" width="1.3" height="2.6"/>
<rect x="632.3" y="11" width="1.3" height="2.6"/>
<rect x="638.0" y="11" width="1.3" height="2.6"/>
<rect x="643.7" y="11" width="1.3" height="2.6"/>
<rect x="649.4" y="11" width="1.3" height="2.6"/>
<rect x="655.1" y="9.5" width="1.2" height="4.5"/>
<rect x="660.7" y="11" width="1.3" height="2.6"/>
<rect x="666.4" y="11" width="1.3" height="2.6"/>
<rect x="672.1" y="11" width="1.3" height="2.6"/>
<rect x="677.7" y="11" width="1.3" height="2.6"/>
<rect x="683.4" y="11" width="1.3" height="2.6"/>
<rect x="689.1" y="9.5" width="1.2" height="4.5"/>
</g></svg>
<div class="a" style="left:258.4px;top:360.2px;width:323.5px;height:3.8px;background:#b09353;"></div>
<svg class="a" style="left:0;top:358px" width="922" height="8"><g fill="#d7c08a">
<rect x="257.4" y="3.6" width="1.1" height="1.6"/>
<rect x="263.1" y="3.6" width="1.1" height="1.6"/>
<rect x="268.7" y="3.6" width="1.1" height="1.6"/>
<rect x="274.4" y="3.6" width="1.1" height="1.6"/>
<rect x="280.1" y="2.2" width="1.1" height="3"/>
<rect x="285.8" y="3.6" width="1.1" height="1.6"/>
<rect x="291.4" y="3.6" width="1.1" height="1.6"/>
<rect x="297.1" y="3.6" width="1.1" height="1.6"/>
<rect x="302.8" y="3.6" width="1.1" height="1.6"/>
<rect x="308.4" y="3.6" width="1.1" height="1.6"/>
<rect x="314.1" y="2.2" width="1.1" height="3"/>
<rect x="319.8" y="3.6" width="1.1" height="1.6"/>
<rect x="325.5" y="3.6" width="1.1" height="1.6"/>
<rect x="331.2" y="3.6" width="1.1" height="1.6"/>
<rect x="336.8" y="3.6" width="1.1" height="1.6"/>
<rect x="342.5" y="3.6" width="1.1" height="1.6"/>
<rect x="348.2" y="2.2" width="1.1" height="3"/>
<rect x="353.9" y="3.6" width="1.1" height="1.6"/>
<rect x="359.5" y="3.6" width="1.1" height="1.6"/>
<rect x="365.2" y="3.6" width="1.1" height="1.6"/>
<rect x="370.9" y="3.6" width="1.1" height="1.6"/>
<rect x="376.6" y="3.6" width="1.1" height="1.6"/>
<rect x="382.2" y="2.2" width="1.1" height="3"/>
<rect x="387.9" y="3.6" width="1.1" height="1.6"/>
<rect x="393.6" y="3.6" width="1.1" height="1.6"/>
<rect x="399.2" y="3.6" width="1.1" height="1.6"/>
<rect x="404.9" y="3.6" width="1.1" height="1.6"/>
<rect x="410.6" y="3.6" width="1.1" height="1.6"/>
<rect x="416.3" y="2.2" width="1.1" height="3"/>
<rect x="421.9" y="3.6" width="1.1" height="1.6"/>
<rect x="427.6" y="3.6" width="1.1" height="1.6"/>
<rect x="433.3" y="3.6" width="1.1" height="1.6"/>
<rect x="439.0" y="3.6" width="1.1" height="1.6"/>
<rect x="444.6" y="3.6" width="1.1" height="1.6"/>
<rect x="450.3" y="2.2" width="1.1" height="3"/>
<rect x="456.0" y="3.6" width="1.1" height="1.6"/>
<rect x="461.7" y="3.6" width="1.1" height="1.6"/>
<rect x="467.3" y="3.6" width="1.1" height="1.6"/>
<rect x="473.0" y="3.6" width="1.1" height="1.6"/>
<rect x="478.7" y="3.6" width="1.1" height="1.6"/>
<rect x="484.4" y="2.2" width="1.1" height="3"/>
<rect x="490.1" y="3.6" width="1.1" height="1.6"/>
<rect x="495.7" y="3.6" width="1.1" height="1.6"/>
<rect x="501.4" y="3.6" width="1.1" height="1.6"/>
<rect x="507.1" y="3.6" width="1.1" height="1.6"/>
<rect x="512.8" y="3.6" width="1.1" height="1.6"/>
<rect x="518.4" y="2.2" width="1.1" height="3"/>
<rect x="524.1" y="3.6" width="1.1" height="1.6"/>
<rect x="529.8" y="3.6" width="1.1" height="1.6"/>
<rect x="535.5" y="3.6" width="1.1" height="1.6"/>
<rect x="541.1" y="3.6" width="1.1" height="1.6"/>
<rect x="546.8" y="3.6" width="1.1" height="1.6"/>
<rect x="552.5" y="2.2" width="1.1" height="3"/>
<rect x="558.2" y="3.6" width="1.1" height="1.6"/>
<rect x="563.8" y="3.6" width="1.1" height="1.6"/>
<rect x="569.5" y="3.6" width="1.1" height="1.6"/>
<rect x="575.2" y="3.6" width="1.1" height="1.6"/>
<rect x="580.9" y="3.6" width="1.1" height="1.6"/>
</g></svg>
<div class="t" style="left:246.6px;top:353.5px;font-size:7.70px;color:#9c9c9c;transform:scaleX(0.830);transform-origin:0 0;">48</div>
<div class="t" style="left:382.8px;top:353.5px;font-size:7.70px;color:#9c9c9c;transform:scaleX(0.830);transform-origin:0 0;">72</div>
<div class="t" style="left:518.8px;top:353.5px;font-size:7.70px;color:#9c9c9c;transform:scaleX(0.830);transform-origin:0 0;">96</div>
<div class="t" style="left:653.9px;top:353.5px;font-size:7.70px;color:#9c9c9c;transform:scaleX(0.830);transform-origin:0 0;">120</div>
<div class="a" style="left:258.4px;top:365.8px;width:329.2px;height:15.0px;background:#fba5a5;"></div>
<svg class="a" style="left:0;top:365px" width="922" height="18"><g fill="#ec8c90">
<rect x="263.0" y="0.8" width="1.2" height="15"/>
<rect x="268.7" y="0.8" width="1.2" height="15"/>
<rect x="274.4" y="0.8" width="1.2" height="15"/>
<rect x="280.0" y="0.8" width="1.2" height="15"/>
<rect x="285.7" y="0.8" width="1.2" height="15"/>
<rect x="291.4" y="0.8" width="1.2" height="15"/>
<rect x="297.1" y="0.8" width="1.2" height="15"/>
<rect x="302.7" y="0.8" width="1.2" height="15"/>
<rect x="308.4" y="0.8" width="1.2" height="15"/>
<rect x="314.1" y="0.8" width="1.2" height="15"/>
<rect x="319.8" y="0.8" width="1.2" height="15"/>
<rect x="325.4" y="0.8" width="1.2" height="15"/>
<rect x="331.1" y="0.8" width="1.2" height="15"/>
<rect x="336.8" y="0.8" width="1.2" height="15"/>
<rect x="342.4" y="0.8" width="1.2" height="15"/>
<rect x="348.1" y="0.8" width="1.2" height="15"/>
<rect x="353.8" y="0.8" width="1.2" height="15"/>
<rect x="359.5" y="0.8" width="1.2" height="15"/>
<rect x="365.1" y="0.8" width="1.2" height="15"/>
<rect x="370.8" y="0.8" width="1.2" height="15"/>
<rect x="376.5" y="0.8" width="1.2" height="15"/>
<rect x="382.2" y="0.8" width="1.2" height="15"/>
<rect x="387.8" y="0.8" width="1.2" height="15"/>
<rect x="393.5" y="0.8" width="1.2" height="15"/>
<rect x="399.2" y="0.8" width="1.2" height="15"/>
<rect x="404.9" y="0.8" width="1.2" height="15"/>
<rect x="410.6" y="0.8" width="1.2" height="15"/>
<rect x="416.2" y="0.8" width="1.2" height="15"/>
<rect x="421.9" y="0.8" width="1.2" height="15"/>
<rect x="427.6" y="0.8" width="1.2" height="15"/>
<rect x="433.2" y="0.8" width="1.2" height="15"/>
<rect x="438.9" y="0.8" width="1.2" height="15"/>
<rect x="444.6" y="0.8" width="1.2" height="15"/>
<rect x="450.3" y="0.8" width="1.2" height="15"/>
<rect x="455.9" y="0.8" width="1.2" height="15"/>
<rect x="461.6" y="0.8" width="1.2" height="15"/>
<rect x="467.3" y="0.8" width="1.2" height="15"/>
<rect x="473.0" y="0.8" width="1.2" height="15"/>
<rect x="478.6" y="0.8" width="1.2" height="15"/>
<rect x="484.3" y="0.8" width="1.2" height="15"/>
<rect x="490.0" y="0.8" width="1.2" height="15"/>
<rect x="495.7" y="0.8" width="1.2" height="15"/>
<rect x="501.3" y="0.8" width="1.2" height="15"/>
<rect x="507.0" y="0.8" width="1.2" height="15"/>
<rect x="512.7" y="0.8" width="1.2" height="15"/>
<rect x="518.4" y="0.8" width="1.2" height="15"/>
<rect x="524.0" y="0.8" width="1.2" height="15"/>
<rect x="529.7" y="0.8" width="1.2" height="15"/>
<rect x="535.4" y="0.8" width="1.2" height="15"/>
<rect x="541.1" y="0.8" width="1.2" height="15"/>
<rect x="546.8" y="0.8" width="1.2" height="15"/>
<rect x="552.4" y="0.8" width="1.2" height="15"/>
<rect x="558.1" y="0.8" width="1.2" height="15"/>
<rect x="563.8" y="0.8" width="1.2" height="15"/>
<rect x="569.4" y="0.8" width="1.2" height="15"/>
<rect x="575.1" y="0.8" width="1.2" height="15"/>
<rect x="580.8" y="0.8" width="1.2" height="15"/>
</g></svg>
<div class="a" style="left:400.3px;top:365.8px;width:40.3px;height:15.0px;background:#f34848;"></div>
<svg class="a" style="left:0;top:365px" width="922" height="18"><g fill="#f5b21c">
<rect x="405.9" y="0.8" width="1" height="15"/>
<rect x="411.6" y="0.8" width="1" height="15"/>
<rect x="417.2" y="0.8" width="1" height="15"/>
<rect x="422.9" y="0.8" width="1" height="15"/>
<rect x="428.6" y="0.8" width="1" height="15"/>
<rect x="434.2" y="0.8" width="1" height="15"/>
<rect x="439.9" y="0.8" width="1" height="15"/>
<rect x="445.6" y="0.8" width="1" height="15"/>
</g></svg>
<div class="a" style="left:218.4px;top:383.3px;width:437.3px;height:14.7px;background:#6c6cfa;"></div>
<div class="a" style="left:218.4px;top:400.9px;width:437.3px;height:14.7px;background:#6c6cfa;"></div>
<div class="a" style="left:218.4px;top:418.5px;width:437.3px;height:14.7px;background:#6c6cfa;"></div>
<div class="a" style="left:218.4px;top:436.1px;width:437.3px;height:14.7px;background:#6c6cfa;"></div>
<div class="a" style="left:218.4px;top:453.7px;width:437.3px;height:14.7px;background:#6c6cfa;"></div>
<svg class="a" style="left:0;top:380px" width="922" height="92"><g fill="#c466b0">
<rect x="217.65" y="3.3" width="1.1" height="14.7"/>
<rect x="223.33" y="3.3" width="1.1" height="14.7"/>
<rect x="229.00" y="3.3" width="1.1" height="14.7"/>
<rect x="234.68" y="3.3" width="1.1" height="14.7"/>
<rect x="240.35" y="3.3" width="1.1" height="14.7"/>
<rect x="246.03" y="3.3" width="1.1" height="14.7"/>
<rect x="251.70" y="3.3" width="1.1" height="14.7"/>
<rect x="257.38" y="3.3" width="1.1" height="14.7"/>
<rect x="263.05" y="3.3" width="1.1" height="14.7"/>
<rect x="268.72" y="3.3" width="1.1" height="14.7"/>
<rect x="274.40" y="3.3" width="1.1" height="14.7"/>
<rect x="280.07" y="3.3" width="1.1" height="14.7"/>
<rect x="285.75" y="3.3" width="1.1" height="14.7"/>
<rect x="291.43" y="3.3" width="1.1" height="14.7"/>
<rect x="297.10" y="3.3" width="1.1" height="14.7"/>
<rect x="302.78" y="3.3" width="1.1" height="14.7"/>
<rect x="308.45" y="3.3" width="1.1" height="14.7"/>
<rect x="314.12" y="3.3" width="1.1" height="14.7"/>
<rect x="319.80" y="3.3" width="1.1" height="14.7"/>
<rect x="325.48" y="3.3" width="1.1" height="14.7"/>
<rect x="331.15" y="3.3" width="1.1" height="14.7"/>
<rect x="336.82" y="3.3" width="1.1" height="14.7"/>
<rect x="342.50" y="3.3" width="1.1" height="14.7"/>
<rect x="348.18" y="3.3" width="1.1" height="14.7"/>
<rect x="353.85" y="3.3" width="1.1" height="14.7"/>
<rect x="359.52" y="3.3" width="1.1" height="14.7"/>
<rect x="365.20" y="3.3" width="1.1" height="14.7"/>
<rect x="370.88" y="3.3" width="1.1" height="14.7"/>
<rect x="376.55" y="3.3" width="1.1" height="14.7"/>
<rect x="382.23" y="3.3" width="1.1" height="14.7"/>
<rect x="387.90" y="3.3" width="1.1" height="14.7"/>
<rect x="393.57" y="3.3" width="1.1" height="14.7"/>
<rect x="399.25" y="3.3" width="1.1" height="14.7"/>
<rect x="404.93" y="3.3" width="1.1" height="14.7"/>
<rect x="410.60" y="3.3" width="1.1" height="14.7"/>
<rect x="416.27" y="3.3" width="1.1" height="14.7"/>
<rect x="421.95" y="3.3" width="1.1" height="14.7"/>
<rect x="427.62" y="3.3" width="1.1" height="14.7"/>
<rect x="433.30" y="3.3" width="1.1" height="14.7"/>
<rect x="438.98" y="3.3" width="1.1" height="14.7"/>
<rect x="444.65" y="3.3" width="1.1" height="14.7"/>
<rect x="450.32" y="3.3" width="1.1" height="14.7"/>
<rect x="456.00" y="3.3" width="1.1" height="14.7"/>
<rect x="461.68" y="3.3" width="1.1" height="14.7"/>
<rect x="467.35" y="3.3" width="1.1" height="14.7"/>
<rect x="473.02" y="3.3" width="1.1" height="14.7"/>
<rect x="478.70" y="3.3" width="1.1" height="14.7"/>
<rect x="484.38" y="3.3" width="1.1" height="14.7"/>
<rect x="490.05" y="3.3" width="1.1" height="14.7"/>
<rect x="495.72" y="3.3" width="1.1" height="14.7"/>
<rect x="501.40" y="3.3" width="1.1" height="14.7"/>
<rect x="507.07" y="3.3" width="1.1" height="14.7"/>
<rect x="512.75" y="3.3" width="1.1" height="14.7"/>
<rect x="518.43" y="3.3" width="1.1" height="14.7"/>
<rect x="524.10" y="3.3" width="1.1" height="14.7"/>
<rect x="529.78" y="3.3" width="1.1" height="14.7"/>
<rect x="535.45" y="3.3" width="1.1" height="14.7"/>
<rect x="541.12" y="3.3" width="1.1" height="14.7"/>
<rect x="546.80" y="3.3" width="1.1" height="14.7"/>
<rect x="552.48" y="3.3" width="1.1" height="14.7"/>
<rect x="558.15" y="3.3" width="1.1" height="14.7"/>
<rect x="563.83" y="3.3" width="1.1" height="14.7"/>
<rect x="569.50" y="3.3" width="1.1" height="14.7"/>
<rect x="575.18" y="3.3" width="1.1" height="14.7"/>
<rect x="580.85" y="3.3" width="1.1" height="14.7"/>
<rect x="586.53" y="3.3" width="1.1" height="14.7"/>
<rect x="592.20" y="3.3" width="1.1" height="14.7"/>
<rect x="597.88" y="3.3" width="1.1" height="14.7"/>
<rect x="603.55" y="3.3" width="1.1" height="14.7"/>
<rect x="609.23" y="3.3" width="1.1" height="14.7"/>
<rect x="614.90" y="3.3" width="1.1" height="14.7"/>
<rect x="620.58" y="3.3" width="1.1" height="14.7"/>
<rect x="626.25" y="3.3" width="1.1" height="14.7"/>
<rect x="631.93" y="3.3" width="1.1" height="14.7"/>
<rect x="637.60" y="3.3" width="1.1" height="14.7"/>
<rect x="643.28" y="3.3" width="1.1" height="14.7"/>
<rect x="648.95" y="3.3" width="1.1" height="14.7"/>
<rect x="217.65" y="20.9" width="1.1" height="14.7"/>
<rect x="223.33" y="20.9" width="1.1" height="14.7"/>
<rect x="229.00" y="20.9" width="1.1" height="14.7"/>
<rect x="234.68" y="20.9" width="1.1" height="14.7"/>
<rect x="240.35" y="20.9" width="1.1" height="14.7"/>
<rect x="246.03" y="20.9" width="1.1" height="14.7"/>
<rect x="251.70" y="20.9" width="1.1" height="14.7"/>
<rect x="257.38" y="20.9" width="1.1" height="14.7"/>
<rect x="263.05" y="20.9" width="1.1" height="14.7"/>
<rect x="268.72" y="20.9" width="1.1" height="14.7"/>
<rect x="274.40" y="20.9" width="1.1" height="14.7"/>
<rect x="280.07" y="20.9" width="1.1" height="14.7"/>
<rect x="285.75" y="20.9" width="1.1" height="14.7"/>
<rect x="291.43" y="20.9" width="1.1" height="14.7"/>
<rect x="297.10" y="20.9" width="1.1" height="14.7"/>
<rect x="302.78" y="20.9" width="1.1" height="14.7"/>
<rect x="308.45" y="20.9" width="1.1" height="14.7"/>
<rect x="314.12" y="20.9" width="1.1" height="14.7"/>
<rect x="319.80" y="20.9" width="1.1" height="14.7"/>
<rect x="325.48" y="20.9" width="1.1" height="14.7"/>
<rect x="331.15" y="20.9" width="1.1" height="14.7"/>
<rect x="336.82" y="20.9" width="1.1" height="14.7"/>
<rect x="342.50" y="20.9" width="1.1" height="14.7"/>
<rect x="348.18" y="20.9" width="1.1" height="14.7"/>
<rect x="353.85" y="20.9" width="1.1" height="14.7"/>
<rect x="359.52" y="20.9" width="1.1" height="14.7"/>
<rect x="365.20" y="20.9" width="1.1" height="14.7"/>
<rect x="370.88" y="20.9" width="1.1" height="14.7"/>
<rect x="376.55" y="20.9" width="1.1" height="14.7"/>
<rect x="382.23" y="20.9" width="1.1" height="14.7"/>
<rect x="387.90" y="20.9" width="1.1" height="14.7"/>
<rect x="393.57" y="20.9" width="1.1" height="14.7"/>
<rect x="399.25" y="20.9" width="1.1" height="14.7"/>
<rect x="404.93" y="20.9" width="1.1" height="14.7"/>
<rect x="410.60" y="20.9" width="1.1" height="14.7"/>
<rect x="416.27" y="20.9" width="1.1" height="14.7"/>
<rect x="421.95" y="20.9" width="1.1" height="14.7"/>
<rect x="427.62" y="20.9" width="1.1" height="14.7"/>
<rect x="433.30" y="20.9" width="1.1" height="14.7"/>
<rect x="438.98" y="20.9" width="1.1" height="14.7"/>
<rect x="444.65" y="20.9" width="1.1" height="14.7"/>
<rect x="450.32" y="20.9" width="1.1" height="14.7"/>
<rect x="456.00" y="20.9" width="1.1" height="14.7"/>
<rect x="461.68" y="20.9" width="1.1" height="14.7"/>
<rect x="467.35" y="20.9" width="1.1" height="14.7"/>
<rect x="473.02" y="20.9" width="1.1" height="14.7"/>
<rect x="478.70" y="20.9" width="1.1" height="14.7"/>
<rect x="484.38" y="20.9" width="1.1" height="14.7"/>
<rect x="490.05" y="20.9" width="1.1" height="14.7"/>
<rect x="495.72" y="20.9" width="1.1" height="14.7"/>
<rect x="501.40" y="20.9" width="1.1" height="14.7"/>
<rect x="507.07" y="20.9" width="1.1" height="14.7"/>
<rect x="512.75" y="20.9" width="1.1" height="14.7"/>
<rect x="518.43" y="20.9" width="1.1" height="14.7"/>
<rect x="524.10" y="20.9" width="1.1" height="14.7"/>
<rect x="529.78" y="20.9" width="1.1" height="14.7"/>
<rect x="535.45" y="20.9" width="1.1" height="14.7"/>
<rect x="541.12" y="20.9" width="1.1" height="14.7"/>
<rect x="546.80" y="20.9" width="1.1" height="14.7"/>
<rect x="552.48" y="20.9" width="1.1" height="14.7"/>
<rect x="558.15" y="20.9" width="1.1" height="14.7"/>
<rect x="563.83" y="20.9" width="1.1" height="14.7"/>
<rect x="569.50" y="20.9" width="1.1" height="14.7"/>
<rect x="575.18" y="20.9" width="1.1" height="14.7"/>
<rect x="580.85" y="20.9" width="1.1" height="14.7"/>
<rect x="586.53" y="20.9" width="1.1" height="14.7"/>
<rect x="592.20" y="20.9" width="1.1" height="14.7"/>
<rect x="597.88" y="20.9" width="1.1" height="14.7"/>
<rect x="603.55" y="20.9" width="1.1" height="14.7"/>
<rect x="609.23" y="20.9" width="1.1" height="14.7"/>
<rect x="614.90" y="20.9" width="1.1" height="14.7"/>
<rect x="620.58" y="20.9" width="1.1" height="14.7"/>
<rect x="626.25" y="20.9" width="1.1" height="14.7"/>
<rect x="631.93" y="20.9" width="1.1" height="14.7"/>
<rect x="637.60" y="20.9" width="1.1" height="14.7"/>
<rect x="643.28" y="20.9" width="1.1" height="14.7"/>
<rect x="648.95" y="20.9" width="1.1" height="14.7"/>
<rect x="217.65" y="38.5" width="1.1" height="14.7"/>
<rect x="223.33" y="38.5" width="1.1" height="14.7"/>
<rect x="229.00" y="38.5" width="1.1" height="14.7"/>
<rect x="234.68" y="38.5" width="1.1" height="14.7"/>
<rect x="240.35" y="38.5" width="1.1" height="14.7"/>
<rect x="246.03" y="38.5" width="1.1" height="14.7"/>
<rect x="251.70" y="38.5" width="1.1" height="14.7"/>
<rect x="257.38" y="38.5" width="1.1" height="14.7"/>
<rect x="263.05" y="38.5" width="1.1" height="14.7"/>
<rect x="268.72" y="38.5" width="1.1" height="14.7"/>
<rect x="274.40" y="38.5" width="1.1" height="14.7"/>
<rect x="280.07" y="38.5" width="1.1" height="14.7"/>
<rect x="285.75" y="38.5" width="1.1" height="14.7"/>
<rect x="291.43" y="38.5" width="1.1" height="14.7"/>
<rect x="297.10" y="38.5" width="1.1" height="14.7"/>
<rect x="302.78" y="38.5" width="1.1" height="14.7"/>
<rect x="308.45" y="38.5" width="1.1" height="14.7"/>
<rect x="314.12" y="38.5" width="1.1" height="14.7"/>
<rect x="319.80" y="38.5" width="1.1" height="14.7"/>
<rect x="325.48" y="38.5" width="1.1" height="14.7"/>
<rect x="331.15" y="38.5" width="1.1" height="14.7"/>
<rect x="336.82" y="38.5" width="1.1" height="14.7"/>
<rect x="342.50" y="38.5" width="1.1" height="14.7"/>
<rect x="348.18" y="38.5" width="1.1" height="14.7"/>
<rect x="353.85" y="38.5" width="1.1" height="14.7"/>
<rect x="359.52" y="38.5" width="1.1" height="14.7"/>
<rect x="365.20" y="38.5" width="1.1" height="14.7"/>
<rect x="370.88" y="38.5" width="1.1" height="14.7"/>
<rect x="376.55" y="38.5" width="1.1" height="14.7"/>
<rect x="382.23" y="38.5" width="1.1" height="14.7"/>
<rect x="387.90" y="38.5" width="1.1" height="14.7"/>
<rect x="393.57" y="38.5" width="1.1" height="14.7"/>
<rect x="399.25" y="38.5" width="1.1" height="14.7"/>
<rect x="404.93" y="38.5" width="1.1" height="14.7"/>
<rect x="410.60" y="38.5" width="1.1" height="14.7"/>
<rect x="416.27" y="38.5" width="1.1" height="14.7"/>
<rect x="421.95" y="38.5" width="1.1" height="14.7"/>
<rect x="427.62" y="38.5" width="1.1" height="14.7"/>
<rect x="433.30" y="38.5" width="1.1" height="14.7"/>
<rect x="438.98" y="38.5" width="1.1" height="14.7"/>
<rect x="444.65" y="38.5" width="1.1" height="14.7"/>
<rect x="450.32" y="38.5" width="1.1" height="14.7"/>
<rect x="456.00" y="38.5" width="1.1" height="14.7"/>
<rect x="461.68" y="38.5" width="1.1" height="14.7"/>
<rect x="467.35" y="38.5" width="1.1" height="14.7"/>
<rect x="473.02" y="38.5" width="1.1" height="14.7"/>
<rect x="478.70" y="38.5" width="1.1" height="14.7"/>
<rect x="484.38" y="38.5" width="1.1" height="14.7"/>
<rect x="490.05" y="38.5" width="1.1" height="14.7"/>
<rect x="495.72" y="38.5" width="1.1" height="14.7"/>
<rect x="501.40" y="38.5" width="1.1" height="14.7"/>
<rect x="507.07" y="38.5" width="1.1" height="14.7"/>
<rect x="512.75" y="38.5" width="1.1" height="14.7"/>
<rect x="518.43" y="38.5" width="1.1" height="14.7"/>
<rect x="524.10" y="38.5" width="1.1" height="14.7"/>
<rect x="529.78" y="38.5" width="1.1" height="14.7"/>
<rect x="535.45" y="38.5" width="1.1" height="14.7"/>
<rect x="541.12" y="38.5" width="1.1" height="14.7"/>
<rect x="546.80" y="38.5" width="1.1" height="14.7"/>
<rect x="552.48" y="38.5" width="1.1" height="14.7"/>
<rect x="558.15" y="38.5" width="1.1" height="14.7"/>
<rect x="563.83" y="38.5" width="1.1" height="14.7"/>
<rect x="569.50" y="38.5" width="1.1" height="14.7"/>
<rect x="575.18" y="38.5" width="1.1" height="14.7"/>
<rect x="580.85" y="38.5" width="1.1" height="14.7"/>
<rect x="586.53" y="38.5" width="1.1" height="14.7"/>
<rect x="592.20" y="38.5" width="1.1" height="14.7"/>
<rect x="597.88" y="38.5" width="1.1" height="14.7"/>
<rect x="603.55" y="38.5" width="1.1" height="14.7"/>
<rect x="609.23" y="38.5" width="1.1" height="14.7"/>
<rect x="614.90" y="38.5" width="1.1" height="14.7"/>
<rect x="620.58" y="38.5" width="1.1" height="14.7"/>
<rect x="626.25" y="38.5" width="1.1" height="14.7"/>
<rect x="631.93" y="38.5" width="1.1" height="14.7"/>
<rect x="637.60" y="38.5" width="1.1" height="14.7"/>
<rect x="643.28" y="38.5" width="1.1" height="14.7"/>
<rect x="648.95" y="38.5" width="1.1" height="14.7"/>
<rect x="217.65" y="56.1" width="1.1" height="14.7"/>
<rect x="223.33" y="56.1" width="1.1" height="14.7"/>
<rect x="229.00" y="56.1" width="1.1" height="14.7"/>
<rect x="234.68" y="56.1" width="1.1" height="14.7"/>
<rect x="240.35" y="56.1" width="1.1" height="14.7"/>
<rect x="246.03" y="56.1" width="1.1" height="14.7"/>
<rect x="251.70" y="56.1" width="1.1" height="14.7"/>
<rect x="257.38" y="56.1" width="1.1" height="14.7"/>
<rect x="263.05" y="56.1" width="1.1" height="14.7"/>
<rect x="268.72" y="56.1" width="1.1" height="14.7"/>
<rect x="274.40" y="56.1" width="1.1" height="14.7"/>
<rect x="280.07" y="56.1" width="1.1" height="14.7"/>
<rect x="285.75" y="56.1" width="1.1" height="14.7"/>
<rect x="291.43" y="56.1" width="1.1" height="14.7"/>
<rect x="297.10" y="56.1" width="1.1" height="14.7"/>
<rect x="302.78" y="56.1" width="1.1" height="14.7"/>
<rect x="308.45" y="56.1" width="1.1" height="14.7"/>
<rect x="314.12" y="56.1" width="1.1" height="14.7"/>
<rect x="319.80" y="56.1" width="1.1" height="14.7"/>
<rect x="325.48" y="56.1" width="1.1" height="14.7"/>
<rect x="331.15" y="56.1" width="1.1" height="14.7"/>
<rect x="336.82" y="56.1" width="1.1" height="14.7"/>
<rect x="342.50" y="56.1" width="1.1" height="14.7"/>
<rect x="348.18" y="56.1" width="1.1" height="14.7"/>
<rect x="353.85" y="56.1" width="1.1" height="14.7"/>
<rect x="359.52" y="56.1" width="1.1" height="14.7"/>
<rect x="365.20" y="56.1" width="1.1" height="14.7"/>
<rect x="370.88" y="56.1" width="1.1" height="14.7"/>
<rect x="376.55" y="56.1" width="1.1" height="14.7"/>
<rect x="382.23" y="56.1" width="1.1" height="14.7"/>
<rect x="387.90" y="56.1" width="1.1" height="14.7"/>
<rect x="393.57" y="56.1" width="1.1" height="14.7"/>
<rect x="399.25" y="56.1" width="1.1" height="14.7"/>
<rect x="404.93" y="56.1" width="1.1" height="14.7"/>
<rect x="410.60" y="56.1" width="1.1" height="14.7"/>
<rect x="416.27" y="56.1" width="1.1" height="14.7"/>
<rect x="421.95" y="56.1" width="1.1" height="14.7"/>
<rect x="427.62" y="56.1" width="1.1" height="14.7"/>
<rect x="433.30" y="56.1" width="1.1" height="14.7"/>
<rect x="438.98" y="56.1" width="1.1" height="14.7"/>
<rect x="444.65" y="56.1" width="1.1" height="14.7"/>
<rect x="450.32" y="56.1" width="1.1" height="14.7"/>
<rect x="456.00" y="56.1" width="1.1" height="14.7"/>
<rect x="461.68" y="56.1" width="1.1" height="14.7"/>
<rect x="467.35" y="56.1" width="1.1" height="14.7"/>
<rect x="473.02" y="56.1" width="1.1" height="14.7"/>
<rect x="478.70" y="56.1" width="1.1" height="14.7"/>
<rect x="484.38" y="56.1" width="1.1" height="14.7"/>
<rect x="490.05" y="56.1" width="1.1" height="14.7"/>
<rect x="495.72" y="56.1" width="1.1" height="14.7"/>
<rect x="501.40" y="56.1" width="1.1" height="14.7"/>
<rect x="507.07" y="56.1" width="1.1" height="14.7"/>
<rect x="512.75" y="56.1" width="1.1" height="14.7"/>
<rect x="518.43" y="56.1" width="1.1" height="14.7"/>
<rect x="524.10" y="56.1" width="1.1" height="14.7"/>
<rect x="529.78" y="56.1" width="1.1" height="14.7"/>
<rect x="535.45" y="56.1" width="1.1" height="14.7"/>
<rect x="541.12" y="56.1" width="1.1" height="14.7"/>
<rect x="546.80" y="56.1" width="1.1" height="14.7"/>
<rect x="552.48" y="56.1" width="1.1" height="14.7"/>
<rect x="558.15" y="56.1" width="1.1" height="14.7"/>
<rect x="563.83" y="56.1" width="1.1" height="14.7"/>
<rect x="569.50" y="56.1" width="1.1" height="14.7"/>
<rect x="575.18" y="56.1" width="1.1" height="14.7"/>
<rect x="580.85" y="56.1" width="1.1" height="14.7"/>
<rect x="586.53" y="56.1" width="1.1" height="14.7"/>
<rect x="592.20" y="56.1" width="1.1" height="14.7"/>
<rect x="597.88" y="56.1" width="1.1" height="14.7"/>
<rect x="603.55" y="56.1" width="1.1" height="14.7"/>
<rect x="609.23" y="56.1" width="1.1" height="14.7"/>
<rect x="614.90" y="56.1" width="1.1" height="14.7"/>
<rect x="620.58" y="56.1" width="1.1" height="14.7"/>
<rect x="626.25" y="56.1" width="1.1" height="14.7"/>
<rect x="631.93" y="56.1" width="1.1" height="14.7"/>
<rect x="637.60" y="56.1" width="1.1" height="14.7"/>
<rect x="643.28" y="56.1" width="1.1" height="14.7"/>
<rect x="648.95" y="56.1" width="1.1" height="14.7"/>
<rect x="217.65" y="73.7" width="1.1" height="14.7"/>
<rect x="223.33" y="73.7" width="1.1" height="14.7"/>
<rect x="229.00" y="73.7" width="1.1" height="14.7"/>
<rect x="234.68" y="73.7" width="1.1" height="14.7"/>
<rect x="240.35" y="73.7" width="1.1" height="14.7"/>
<rect x="246.03" y="73.7" width="1.1" height="14.7"/>
<rect x="251.70" y="73.7" width="1.1" height="14.7"/>
<rect x="257.38" y="73.7" width="1.1" height="14.7"/>
<rect x="263.05" y="73.7" width="1.1" height="14.7"/>
<rect x="268.72" y="73.7" width="1.1" height="14.7"/>
<rect x="274.40" y="73.7" width="1.1" height="14.7"/>
<rect x="280.07" y="73.7" width="1.1" height="14.7"/>
<rect x="285.75" y="73.7" width="1.1" height="14.7"/>
<rect x="291.43" y="73.7" width="1.1" height="14.7"/>
<rect x="297.10" y="73.7" width="1.1" height="14.7"/>
<rect x="302.78" y="73.7" width="1.1" height="14.7"/>
<rect x="308.45" y="73.7" width="1.1" height="14.7"/>
<rect x="314.12" y="73.7" width="1.1" height="14.7"/>
<rect x="319.80" y="73.7" width="1.1" height="14.7"/>
<rect x="325.48" y="73.7" width="1.1" height="14.7"/>
<rect x="331.15" y="73.7" width="1.1" height="14.7"/>
<rect x="336.82" y="73.7" width="1.1" height="14.7"/>
<rect x="342.50" y="73.7" width="1.1" height="14.7"/>
<rect x="348.18" y="73.7" width="1.1" height="14.7"/>
<rect x="353.85" y="73.7" width="1.1" height="14.7"/>
<rect x="359.52" y="73.7" width="1.1" height="14.7"/>
<rect x="365.20" y="73.7" width="1.1" height="14.7"/>
<rect x="370.88" y="73.7" width="1.1" height="14.7"/>
<rect x="376.55" y="73.7" width="1.1" height="14.7"/>
<rect x="382.23" y="73.7" width="1.1" height="14.7"/>
<rect x="387.90" y="73.7" width="1.1" height="14.7"/>
<rect x="393.57" y="73.7" width="1.1" height="14.7"/>
<rect x="399.25" y="73.7" width="1.1" height="14.7"/>
<rect x="404.93" y="73.7" width="1.1" height="14.7"/>
<rect x="410.60" y="73.7" width="1.1" height="14.7"/>
<rect x="416.27" y="73.7" width="1.1" height="14.7"/>
<rect x="421.95" y="73.7" width="1.1" height="14.7"/>
<rect x="427.62" y="73.7" width="1.1" height="14.7"/>
<rect x="433.30" y="73.7" width="1.1" height="14.7"/>
<rect x="438.98" y="73.7" width="1.1" height="14.7"/>
<rect x="444.65" y="73.7" width="1.1" height="14.7"/>
<rect x="450.32" y="73.7" width="1.1" height="14.7"/>
<rect x="456.00" y="73.7" width="1.1" height="14.7"/>
<rect x="461.68" y="73.7" width="1.1" height="14.7"/>
<rect x="467.35" y="73.7" width="1.1" height="14.7"/>
<rect x="473.02" y="73.7" width="1.1" height="14.7"/>
<rect x="478.70" y="73.7" width="1.1" height="14.7"/>
<rect x="484.38" y="73.7" width="1.1" height="14.7"/>
<rect x="490.05" y="73.7" width="1.1" height="14.7"/>
<rect x="495.72" y="73.7" width="1.1" height="14.7"/>
<rect x="501.40" y="73.7" width="1.1" height="14.7"/>
<rect x="507.07" y="73.7" width="1.1" height="14.7"/>
<rect x="512.75" y="73.7" width="1.1" height="14.7"/>
<rect x="518.43" y="73.7" width="1.1" height="14.7"/>
<rect x="524.10" y="73.7" width="1.1" height="14.7"/>
<rect x="529.78" y="73.7" width="1.1" height="14.7"/>
<rect x="535.45" y="73.7" width="1.1" height="14.7"/>
<rect x="541.12" y="73.7" width="1.1" height="14.7"/>
<rect x="546.80" y="73.7" width="1.1" height="14.7"/>
<rect x="552.48" y="73.7" width="1.1" height="14.7"/>
<rect x="558.15" y="73.7" width="1.1" height="14.7"/>
<rect x="563.83" y="73.7" width="1.1" height="14.7"/>
<rect x="569.50" y="73.7" width="1.1" height="14.7"/>
<rect x="575.18" y="73.7" width="1.1" height="14.7"/>
<rect x="580.85" y="73.7" width="1.1" height="14.7"/>
<rect x="586.53" y="73.7" width="1.1" height="14.7"/>
<rect x="592.20" y="73.7" width="1.1" height="14.7"/>
<rect x="597.88" y="73.7" width="1.1" height="14.7"/>
<rect x="603.55" y="73.7" width="1.1" height="14.7"/>
<rect x="609.23" y="73.7" width="1.1" height="14.7"/>
<rect x="614.90" y="73.7" width="1.1" height="14.7"/>
<rect x="620.58" y="73.7" width="1.1" height="14.7"/>
<rect x="626.25" y="73.7" width="1.1" height="14.7"/>
<rect x="631.93" y="73.7" width="1.1" height="14.7"/>
<rect x="637.60" y="73.7" width="1.1" height="14.7"/>
<rect x="643.28" y="73.7" width="1.1" height="14.7"/>
<rect x="648.95" y="73.7" width="1.1" height="14.7"/>
</g></svg>
<div class="a" style="left:217.0px;top:468.0px;width:478.0px;height:7.0px;background:#2b2b2d;"></div>
<div class="a" style="left:258.4px;top:468.0px;width:323.5px;height:7.0px;background:#333335;"></div>
<div class="a" style="left:399.6px;top:364.0px;width:1.3px;height:111.0px;background:rgba(215,215,235,0.7);"></div>
<svg class="a" style="left:393px;top:350px" width="16" height="17"><path d="M4,2.6 H10.8 V10.2 L7.4,13.6 L4,10.2 Z" fill="#8c8c8c" stroke="#0c0c0c" stroke-width="1.1"/><line x1="6.3" y1="3.8" x2="6.3" y2="10" stroke="#e0e0e0" stroke-width="0.9"/><line x1="8.6" y1="3.8" x2="8.6" y2="10" stroke="#e0e0e0" stroke-width="0.9"/></svg>
<div class="t" style="left:404.3px;top:352.6px;font-size:8.50px;color:#e0e0e0;transform:scaleX(0.900);transform-origin:0 0;">5</div>
<div class="a" style="left:396.6px;top:370px;width:6.2px;height:6.4px;border-radius:50%;background:#ffffff"></div>
<div class="a" style="left:444.9px;top:350.5px;width:1.1px;height:13.5px;background:#f0f0f0;"></div>
<div class="t" style="left:447.0px;top:352.4px;font-size:8.50px;color:#e8e8e8;transform:scaleX(0.850);transform-origin:0 0;">83</div>
<div class="a" style="left:442.1px;top:369.8px;width:6.8px;height:6.8px;border-radius:50%;background:#ffffff"></div>
<div class="a" style="left:218.9px;top:475.4px;width:47px;height:14.7px;background:#313133;border:1px solid #48484a"></div>
<div class="t" style="left:221.3px;top:479.8px;font-size:8.60px;color:#cccccc;transform:scaleX(0.820);transform-origin:0 0;">-100.00</div>
<div class="a" style="left:402.3px;top:475.4px;width:60px;height:14.5px;background:#4b4b4d;border:1px solid #444446;border-radius:1px"></div>
<div class="a" style="left:404.6px;top:477.0px;width:4.5px;height:11.0px;background:#2f2f31;"></div>
<div class="t" style="left:419.5px;top:479.8px;font-size:8.60px;color:#bdbdbd;transform:scaleX(0.850);transform-origin:0 0;">43</div>
<div class="a" style="left:647.6px;top:475.4px;width:47.8px;height:14.7px;background:#313133;border:1px solid #48484a"></div>
<div class="t" style="left:650.6px;top:479.8px;font-size:8.60px;color:#cccccc;transform:scaleX(0.820);transform-origin:0 0;">300.00</div>
<div class="a" style="left:87.0px;top:491.0px;width:765.0px;height:2.0px;background:#525254;"></div>
<div class="a" style="left:87.0px;top:513.0px;width:766.0px;height:1.0px;background:#444446;"></div>
<div class="a" style="left:87.0px;top:514.3px;width:766.0px;height:1.7px;background:#262628;"></div>
<div class="t" style="left:709.8px;top:345.1px;font-size:8.30px;color:#c6c6c6;transform:scaleX(0.800);transform-origin:0 0;">Play Type</div>
<div class="a" style="left:767.6px;top:340.2px;width:61.8px;height:14.6px;background:#2e2e30;border:1px solid #464648;border-radius:1px"></div>
<div class="t" style="left:771.0px;top:345.1px;font-size:8.30px;color:#d4d4d4;transform:scaleX(0.800);transform-origin:0 0;">Frame Stepping</div>
<div class="a" style="left:819.8px;top:342.0px;width:8.4px;height:11px;background:#232325;border:0.6px solid #3a3a3c;border-radius:1.5px"></div>
<svg class="a" style="left:821px;top:345.7px" width="7" height="5"><polygon points="1.8,1 5.2,1 3.5,3.3" fill="#bbbbbb"/></svg>
<div class="a" style="left:709.0px;top:357.7px;width:120.0px;height:1.0px;background:#38383a;"></div>
<div class="t" style="left:709.8px;top:366.3px;font-size:8.30px;color:#c6c6c6;transform:scaleX(0.800);transform-origin:0 0;">Current</div>
<div class="a" style="left:767.6px;top:361.4px;width:61.8px;height:14.6px;background:#2e2e30;border:1px solid #464648;border-radius:1px"></div>
<div class="t" style="left:771.0px;top:366.3px;font-size:8.30px;color:#d4d4d4;transform:scaleX(0.800);transform-origin:0 0;">75.00</div>
<div class="a" style="left:709.0px;top:378.9px;width:120.0px;height:1.0px;background:#38383a;"></div>
<div class="t" style="left:709.8px;top:387.5px;font-size:8.30px;color:#c6c6c6;transform:scaleX(0.800);transform-origin:0 0;">Start</div>
<div class="a" style="left:767.6px;top:382.6px;width:61.8px;height:14.6px;background:#2e2e30;border:1px solid #464648;border-radius:1px"></div>
<div class="t" style="left:771.0px;top:387.5px;font-size:8.30px;color:#d4d4d4;transform:scaleX(0.800);transform-origin:0 0;">50.00</div>
<div class="a" style="left:709.0px;top:400.1px;width:120.0px;height:1.0px;background:#38383a;"></div>
<div class="t" style="left:709.8px;top:408.7px;font-size:8.30px;color:#c6c6c6;transform:scaleX(0.800);transform-origin:0 0;">End</div>
<div class="a" style="left:767.6px;top:403.8px;width:61.8px;height:14.6px;background:#2e2e30;border:1px solid #464648;border-radius:1px"></div>
<div class="t" style="left:771.0px;top:408.7px;font-size:8.30px;color:#d4d4d4;transform:scaleX(0.800);transform-origin:0 0;">107.00</div>
<div class="a" style="left:709.0px;top:421.3px;width:120.0px;height:1.0px;background:#38383a;"></div>
<div class="t" style="left:709.8px;top:429.9px;font-size:8.30px;color:#c6c6c6;transform:scaleX(0.800);transform-origin:0 0;">Scene Time Warp</div>
<div class="a" style="left:767.6px;top:425.0px;width:61.8px;height:14.6px;background:#2e2e30;border:1px solid #464648;border-radius:1px"></div>
<div class="t" style="left:771.0px;top:429.9px;font-size:8.30px;color:#d4d4d4;transform:scaleX(0.800);transform-origin:0 0;">1.00</div>
<svg class="a" style="left:819px;top:425.7px" width="10" height="14"><polygon points="5,1 8,4.5 2,4.5" fill="#a8a8a8"/><polygon points="5,12 8,8.5 2,8.5" fill="#a8a8a8"/></svg>
<div class="a" style="left:709.0px;top:442.5px;width:120.0px;height:1.0px;background:#38383a;"></div>
<div class="t" style="left:709.8px;top:451.1px;font-size:8.30px;color:#c6c6c6;transform:scaleX(0.800);transform-origin:0 0;">Display Unit</div>
<div class="a" style="left:767.6px;top:446.2px;width:61.8px;height:14.6px;background:#2e2e30;border:1px solid #464648;border-radius:1px"></div>
<div class="t" style="left:771.0px;top:451.1px;font-size:8.30px;color:#d4d4d4;transform:scaleX(0.800);transform-origin:0 0;">Frame</div>
<div class="a" style="left:819.8px;top:448.0px;width:8.4px;height:11px;background:#232325;border:0.6px solid #3a3a3c;border-radius:1.5px"></div>
<svg class="a" style="left:821px;top:451.7px" width="7" height="5"><polygon points="1.8,1 5.2,1 3.5,3.3" fill="#bbbbbb"/></svg>
<div class="a" style="left:709.0px;top:463.7px;width:120.0px;height:1.0px;background:#38383a;"></div>
<div class="t" style="left:709.8px;top:472.3px;font-size:8.30px;color:#c6c6c6;transform:scaleX(0.800);transform-origin:0 0;">FPS</div>
<div class="a" style="left:767.6px;top:467.4px;width:61.8px;height:14.6px;background:#2e2e30;border:1px solid #464648;border-radius:1px"></div>
<div class="t" style="left:771.0px;top:472.3px;font-size:8.30px;color:#d4d4d4;transform:scaleX(0.800);transform-origin:0 0;">24</div>
<div class="a" style="left:819.8px;top:469.2px;width:8.4px;height:11px;background:#232325;border:0.6px solid #3a3a3c;border-radius:1.5px"></div>
<svg class="a" style="left:821px;top:472.9px" width="7" height="5"><polygon points="1.8,1 5.2,1 3.5,3.3" fill="#bbbbbb"/></svg>
<div class="a" style="left:441.3px;top:374.3px;width:127.4px;height:141.7px;background:#2d2d2f;border-right:1.2px solid #1f1f21;border-left:0.8px solid #232325;border-top:0.6px solid #232325"></div>
<div class="t" style="left:458.9px;top:381.3px;font-size:9.00px;color:#e4e4e4;transform:scaleX(0.815);transform-origin:0 0;">Create Keyframe</div>
<div class="t" style="left:536.9px;top:381.3px;font-size:9.00px;color:#e4e4e4;transform:scaleX(0.820);transform-origin:0 0;">S</div>
<div class="t" style="left:458.9px;top:399.3px;font-size:9.00px;color:#e4e4e4;transform:scaleX(0.815);transform-origin:0 0;">Delete Keyframe</div>
<div class="t" style="left:536.9px;top:399.3px;font-size:9.00px;color:#e4e4e4;transform:scaleX(0.820);transform-origin:0 0;">Del</div>
<div class="t" style="left:458.9px;top:417.4px;font-size:9.00px;color:#e4e4e4;transform:scaleX(0.815);transform-origin:0 0;">Move Layer Horizontally</div>
<div class="t" style="left:458.9px;top:435.0px;font-size:9.00px;color:#e09c22;transform:scaleX(0.815);transform-origin:0 0;">Copy Keyframe</div>
<div class="t" style="left:536.9px;top:435.0px;font-size:9.00px;color:#e09c22;transform:scaleX(0.820);transform-origin:0 0;">Ctrl+C</div>
<div class="t" style="left:458.9px;top:451.2px;font-size:9.00px;color:#e4e4e4;transform:scaleX(0.815);transform-origin:0 0;">Paste Keyframe</div>
<div class="t" style="left:536.9px;top:451.2px;font-size:9.00px;color:#e4e4e4;transform:scaleX(0.820);transform-origin:0 0;">Ctrl+V</div>
<div class="t" style="left:458.9px;top:468.7px;font-size:9.00px;color:#e4e4e4;transform:scaleX(0.815);transform-origin:0 0;">Time Slider Settings</div>
<div class="t" style="left:458.9px;top:488.9px;font-size:9.00px;color:#e4e4e4;transform:scaleX(0.815);transform-origin:0 0;">Cut Anim Layer</div>
<div class="t" style="left:458.9px;top:506.5px;font-size:9.00px;color:#4e4e50;transform:scaleX(0.815);transform-origin:0 0;">Merge Anim Layer</div>
<div class="a" style="left:454.0px;top:393.2px;width:107.0px;height:1.0px;background:#252527;"></div>
<div class="a" style="left:454.0px;top:394.2px;width:107.0px;height:1.0px;background:#323234;"></div>
<div class="a" style="left:454.0px;top:411.4px;width:107.0px;height:1.0px;background:#252527;"></div>
<div class="a" style="left:454.0px;top:412.4px;width:107.0px;height:1.0px;background:#323234;"></div>
<div class="a" style="left:454.0px;top:430.0px;width:107.0px;height:1.0px;background:#252527;"></div>
<div class="a" style="left:454.0px;top:431.0px;width:107.0px;height:1.0px;background:#323234;"></div>
<div class="a" style="left:454.0px;top:446.8px;width:107.0px;height:1.0px;background:#252527;"></div>
<div class="a" style="left:454.0px;top:447.8px;width:107.0px;height:1.0px;background:#323234;"></div>
<div class="a" style="left:454.0px;top:462.8px;width:107.0px;height:1.0px;background:#252527;"></div>
<div class="a" style="left:454.0px;top:463.8px;width:107.0px;height:1.0px;background:#323234;"></div>
<div class="a" style="left:454.0px;top:481.4px;width:107.0px;height:1.0px;background:#252527;"></div>
<div class="a" style="left:454.0px;top:482.4px;width:107.0px;height:1.0px;background:#323234;"></div>
<svg class="a" style="left:442px;top:395px" width="14" height="122"><g fill="none" stroke="#8c8c8c" stroke-width="1">
<path d="M5.3,5.8 h4 l-0.4,5 h-3.2 z" fill="#48484a" stroke="#7a7a7a" stroke-width="0.9"/><line x1="4.6" y1="4.9" x2="10" y2="4.9" stroke="#7a7a7a" stroke-width="0.9"/>
<circle cx="5" cy="74" r="1.6"/><circle cx="9" cy="78.5" r="2.2" stroke-width="1.7" stroke-dasharray="1.2 0.6"/>
<path d="M8,91 l-3.5,3.5 l5,3 l-4,4 M4,96.5 l1.5,1.5 M9,93 l1,-1"/>
</g><g fill="none" stroke="#4f4f51" stroke-width="1"><rect x="3" y="109" width="5" height="6"/><rect x="6" y="112" width="5" height="6"/></g></svg>
</body></html>
